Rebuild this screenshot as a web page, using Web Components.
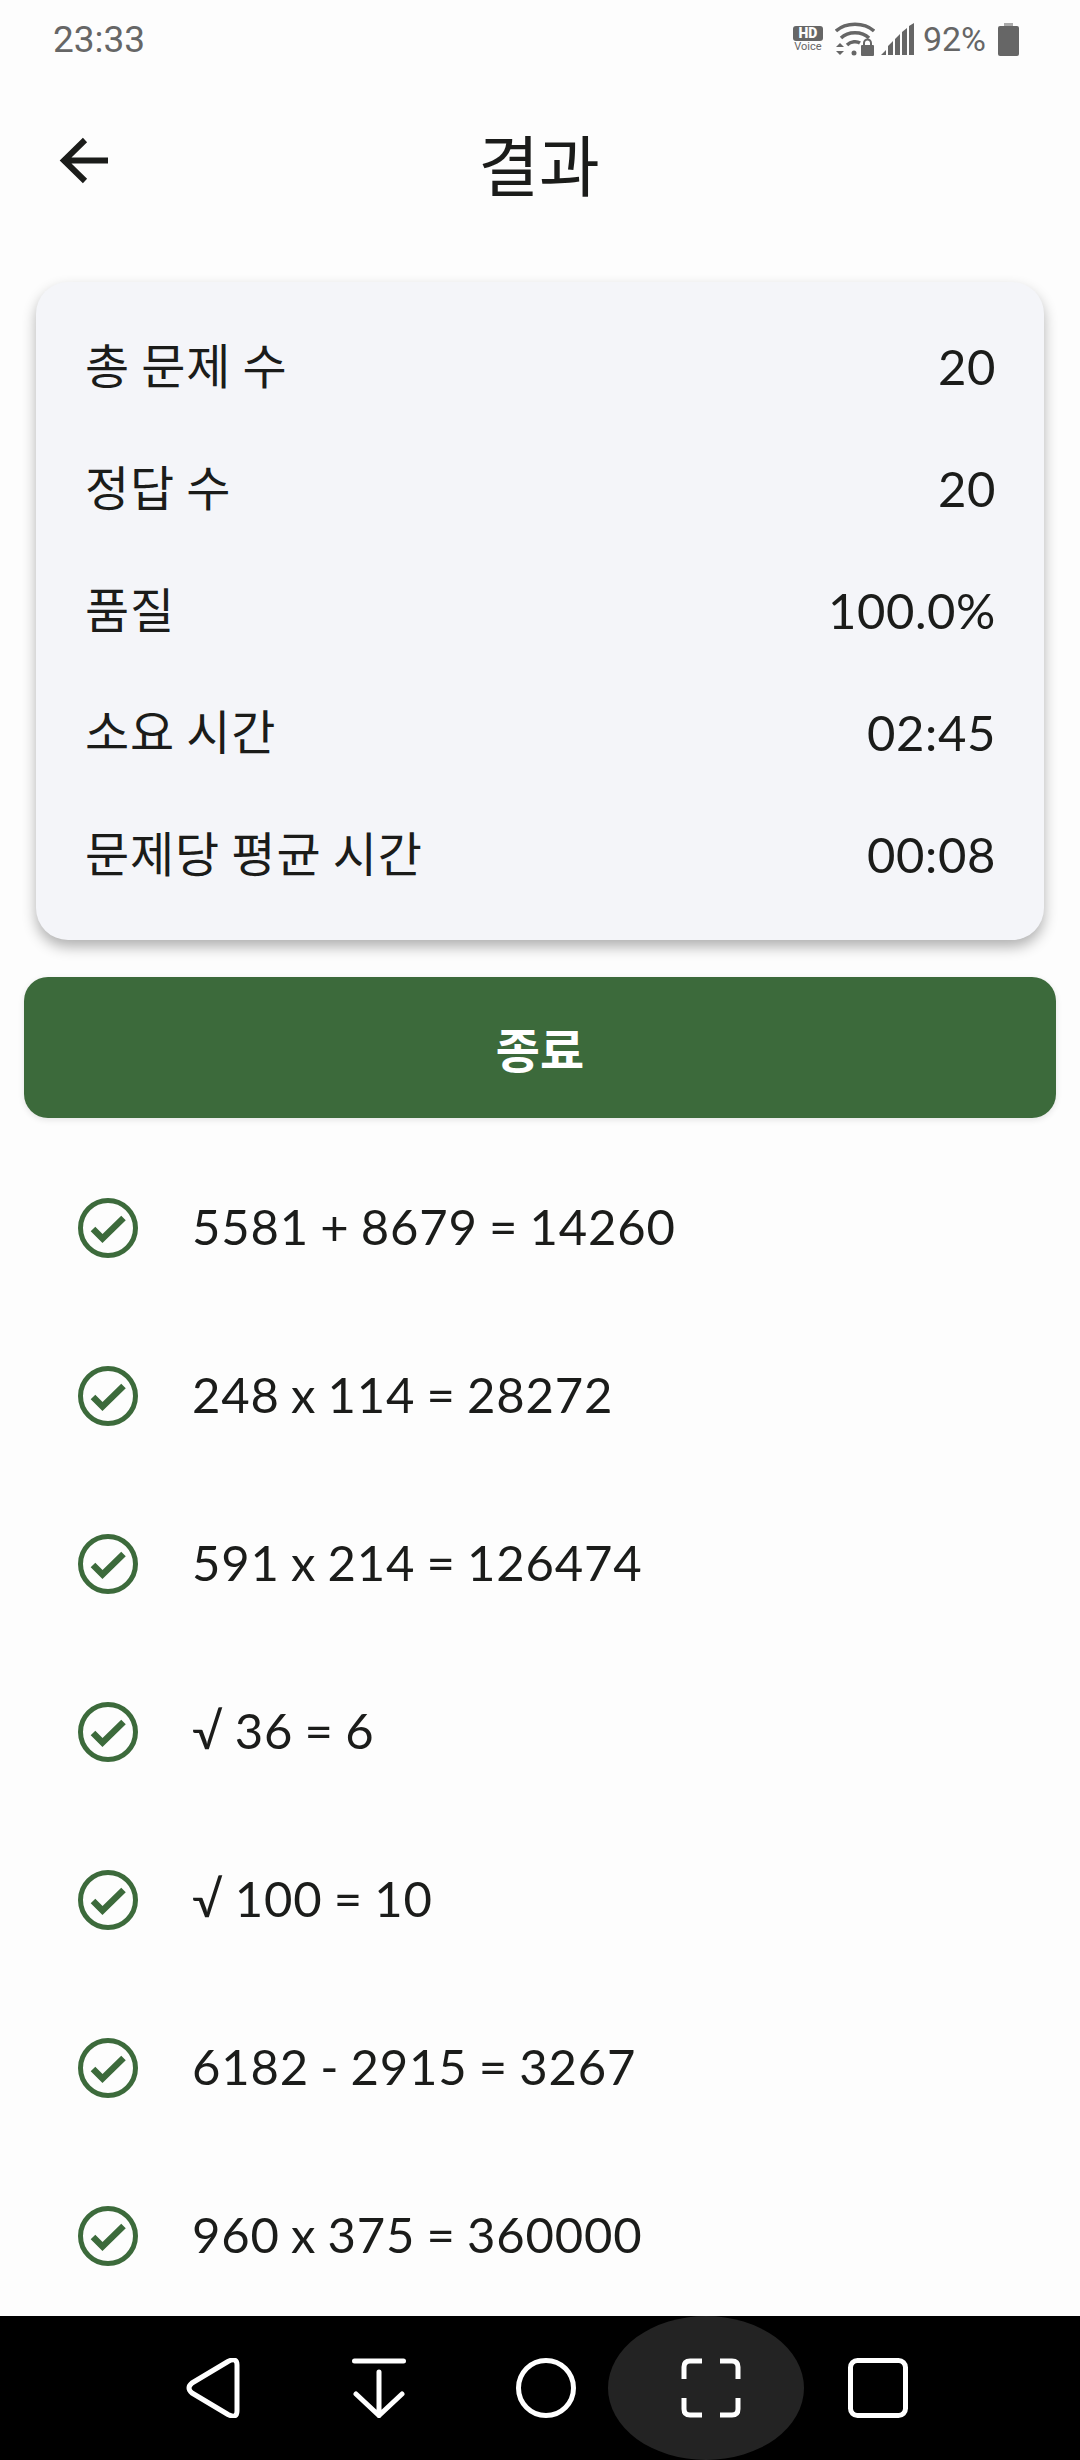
<!DOCTYPE html>
<html lang="ko">
<head>
<meta charset="utf-8">
<title>결과</title>
<style>
  html, body { margin: 0; height: 100%; }
  body {
    width: 1080px;
    height: 2460px;
    overflow: hidden;
    display: flex;
    flex-direction: column;
    background: #fdfdfd;
    font-family: Lato, "Noto Sans CJK KR", sans-serif;
    color: #1b1c1a;
  }
</style>
</head>
<body>
  <status-bar></status-bar>
  <app-bar>결과</app-bar>
  <stat-card>
    <stat-row label="총 문제 수" value="20"></stat-row>
    <stat-row label="정답 수" value="20"></stat-row>
    <stat-row label="품질" value="100.0%"></stat-row>
    <stat-row label="소요 시간" value="02:45"></stat-row>
    <stat-row label="문제당 평균 시간" value="00:08"></stat-row>
  </stat-card>
  <finish-button>종료</finish-button>
  <result-list>
    <result-row>5581 + 8679 = 14260</result-row>
    <result-row>248 x 114 = 28272</result-row>
    <result-row>591 x 214 = 126474</result-row>
    <result-row>√ 36 = 6</result-row>
    <result-row>√ 100 = 10</result-row>
    <result-row>6182 - 2915 = 3267</result-row>
    <result-row>960 x 375 = 360000</result-row>
  </result-list>
  <nav-bar></nav-bar>

<script>
class StatusBar extends HTMLElement {
  connectedCallback() {
    this.attachShadow({ mode: 'open' }).innerHTML = `
      <style>
        :host {
          display: flex;
          align-items: center;
          justify-content: space-between;
          flex: none;
          height: 78px;
          padding: 0 61px 0 53px;
          font-family: Roboto, sans-serif;
          color: #666;
        }
        .time { font-size: 37px; }
        .icons { display: flex; align-items: center; }
        .hd { width: 30px; margin-right: 12px; text-align: center; }
        .hd b {
          display: block;
          height: 15px;
          background: #666;
          color: #fdfdfd;
          border-radius: 3px;
          font-size: 14px;
          line-height: 15px;
          font-weight: 900;
        }
        .hd span { display: block; font-size: 11px; line-height: 12px; }
        svg { display: block; fill: #666; }
        .pct { font-size: 34px; margin: 0 12px 0 8px; }
      </style>
      <span class="time">23:33</span>
      <div class="icons">
        <div class="hd"><b>HD</b><span>Voice</span></div>
        <svg width="40" height="34" viewBox="0 0 40 34">
          <path d="M1 9C11 0 29 0 39 9" fill="none" stroke="#666" stroke-width="3.4"/>
          <path d="M6 16C13 9 27 9 34 16" fill="none" stroke="#666" stroke-width="3.4"/>
          <path d="M12 23C16 19 22 19 25 21" fill="none" stroke="#666" stroke-width="3.4"/>
          <circle cx="19" cy="31" r="2.5"/>
          <path d="M1 25l4-4 4 4zM1 29l4 4 4-4z"/>
          <rect x="26" y="23" width="13" height="11" rx="1"/>
          <path d="M29 24v-3a3.500 3.500 0 0 1 7 0v3" fill="none" stroke="#666" stroke-width="2"/>
        </svg>
        <svg width="34" height="32" viewBox="0 0 34 32" style="margin-left:6px">
          <path d="M0 32l5-5v5zM7 32v-9l5-5v14zM14 32V16l5-5v21zM21 32V9l5-4v27zM28 32V3l5-3v32z"/>
        </svg>
        <span class="pct">92%</span>
        <svg width="21" height="33" viewBox="0 0 21 33">
          <rect x="6" y="0" width="9" height="3" fill="#aaa"/>
          <rect x="0" y="3" width="21" height="30" rx="2"/>
        </svg>
      </div>`;
  }
}

class AppBar extends HTMLElement {
  connectedCallback() {
    this.attachShadow({ mode: 'open' }).innerHTML = `
      <style>
        :host {
          display: grid;
          grid-template-columns: 60px 1fr 60px;
          align-items: center;
          flex: none;
          height: 164px;
          padding: 0 54px 40px;
        }
        svg { display: block; margin-top: 2px; }
        h1 {
          margin: 3px 0 0 -2px;
          text-align: center;
          font-size: 66px;
          line-height: 90px;
          font-weight: 400;
          font-family: "Noto Sans CJK KR", sans-serif;
        }
      </style>
      <svg width="60" height="60" viewBox="0 0 60 60">
        <path d="M54 29.500H12M31 9L10 29.500L31 50" fill="none" stroke="#1b1c1a" stroke-width="6"/>
      </svg>
      <h1><slot></slot></h1>
      <span></span>`;
  }
}

class StatCard extends HTMLElement {
  connectedCallback() {
    this.attachShadow({ mode: 'open' }).innerHTML = `
      <style>
        :host {
          display: block;
          flex: none;
          margin: 0 36px;
          padding: 23.5px 48px 23.5px 49px;
          background: #f4f5f9;
          border-radius: 32px;
          box-shadow: 0 7px 14px rgba(0, 0, 0, .3);
        }
      </style>
      <slot></slot>`;
  }
}

class StatRow extends HTMLElement {
  connectedCallback() {
    this.attachShadow({ mode: 'open' }).innerHTML = `
      <style>
        :host {
          display: flex;
          align-items: center;
          justify-content: space-between;
          height: 122.2px;
          font-size: 48px;
        }
        .label { letter-spacing: .9px; word-spacing: -2px; position: relative; top: -4px; }
        .value { font-size: 49px; letter-spacing: .6px; position: relative; top: -1px; }
      </style>
      <span class="label">${this.getAttribute('label')}</span>
      <span class="value">${this.getAttribute('value')}</span>`;
  }
}

class FinishButton extends HTMLElement {
  connectedCallback() {
    this.attachShadow({ mode: 'open' }).innerHTML = `
      <style>
        :host {
          display: flex;
          align-items: center;
          justify-content: center;
          flex: none;
          height: 141px;
          margin: 37px 24px 0;
          background: #3c6a3b;
          color: #fff;
          border-radius: 24px;
          font-size: 48px;
          font-weight: 700;
          box-shadow: 0 2px 6px rgba(0, 0, 0, .1);
        }
      </style>
      <slot></slot>`;
  }
}

class ResultList extends HTMLElement {
  connectedCallback() {
    this.attachShadow({ mode: 'open' }).innerHTML = `
      <style>
        :host {
          display: block;
          flex: 1;
          min-height: 0;
          overflow: hidden;
          padding-top: 26px;
        }
      </style>
      <slot></slot>`;
  }
}

class ResultRow extends HTMLElement {
  connectedCallback() {
    this.attachShadow({ mode: 'open' }).innerHTML = `
      <style>
        :host {
          display: flex;
          align-items: center;
          gap: 54px;
          height: 168px;
          padding-left: 78px;
          font-size: 49px;
          letter-spacing: .8px;
          word-spacing: -2px;
        }
        svg { display: block; flex: none; }
        span { position: relative; top: -2px; }
      </style>
      <svg width="60" height="60" viewBox="0 0 60 60">
        <circle cx="30" cy="30" r="27.500" fill="none" stroke="#3c6a3b" stroke-width="5"/>
        <path d="M15 31l9.500 9.500L45.500 20" fill="none" stroke="#3c6a3b" stroke-width="6.500"/>
      </svg>
      <span><slot></slot></span>`;
  }
}

class NavBar extends HTMLElement {
  connectedCallback() {
    this.attachShadow({ mode: 'open' }).innerHTML = `
      <style>
        :host {
          display: grid;
          grid-template-columns: repeat(5, 166px);
          flex: none;
          position: relative;
          height: 144px;
          padding: 0 130px;
          background: #000;
        }
        .hl {
          position: absolute;
          left: 608px;
          top: 0;
          width: 196px;
          height: 144px;
          border-radius: 98px / 72px;
          background: #232323;
        }
        div.cell { display: flex; align-items: center; justify-content: center; position: relative; }
        svg { display: block; fill: none; stroke: #fff; stroke-width: 5; }
      </style>
      <span class="hl"></span>
      <div class="cell">
        <svg width="54" height="60" viewBox="0 0 54 60">
          <path d="M6 25L42 3.500Q51 -1 51 7V53Q51 61 42 56.500L6 35Q0 30 6 25Z" stroke-linejoin="round"/>
        </svg>
      </div>
      <div class="cell">
        <svg width="54" height="60" viewBox="0 0 54 60" stroke-linecap="round">
          <path d="M2.500 3H51.500M27 14V57.500M4 36L27 57.500L50 36"/>
        </svg>
      </div>
      <div class="cell" style="left:1px">
        <svg width="60" height="60" viewBox="0 0 60 60"><circle cx="30" cy="30" r="27.500"/></svg>
      </div>
      <div class="cell">
        <svg width="60" height="60" viewBox="0 0 60 60">
          <path d="M21 3H9Q3 3 3 9V21M39 3H51Q57 3 57 9V21M21 57H9Q3 57 3 51V40M39 57H51Q57 57 57 51V40"/>
        </svg>
      </div>
      <div class="cell" style="left:1px">
        <svg width="60" height="60" viewBox="0 0 60 60"><rect x="2.500" y="2.500" width="55" height="55" rx="7"/></svg>
      </div>`;
  }
}

customElements.define('status-bar', StatusBar);
customElements.define('app-bar', AppBar);
customElements.define('stat-card', StatCard);
customElements.define('stat-row', StatRow);
customElements.define('finish-button', FinishButton);
customElements.define('result-list', ResultList);
customElements.define('result-row', ResultRow);
customElements.define('nav-bar', NavBar);
</script>
</body>
</html>
